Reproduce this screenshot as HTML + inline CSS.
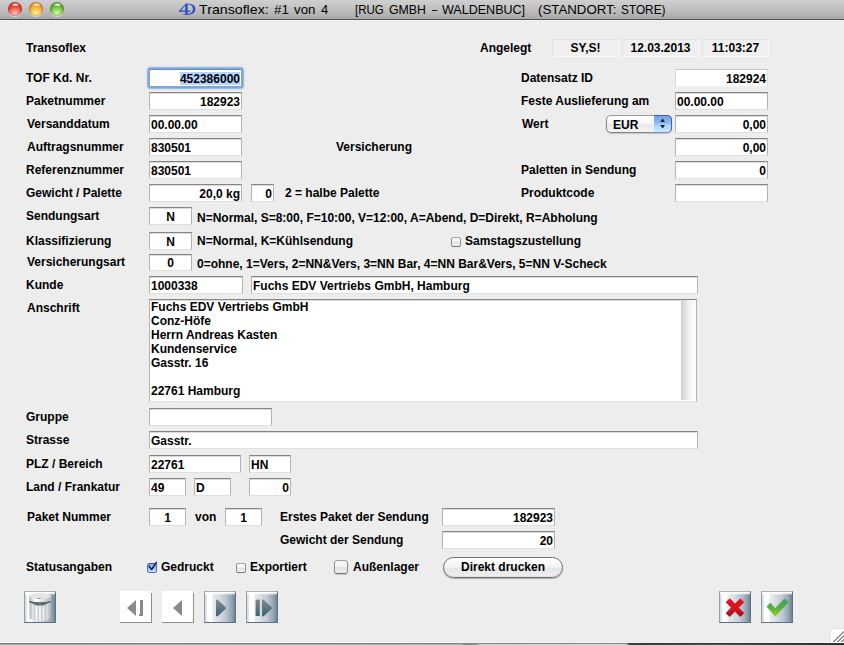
<!DOCTYPE html>
<html>
<head>
<meta charset="utf-8">
<title>Transoflex</title>
<style>
html,body{margin:0;padding:0}
body{width:844px;height:645px;overflow:hidden;position:relative;background:#ededed;
 font-family:"Liberation Sans",sans-serif;font-weight:bold;font-size:12px;line-height:14px;color:#000}
div,span{position:absolute;box-sizing:border-box;white-space:nowrap}
/* title bar */
#tb{left:0;top:0;width:844px;height:19px;background:linear-gradient(#cfcfcf,#c3c3c3 40%,#aeaeae 88%,#a9a9a9);}
#tbl{left:0;top:19px;width:844px;height:1px;background:#515151}
#tbh{left:0;top:20px;width:844px;height:1px;background:#f2f2f2}
.tl{width:14px;height:14px;border-radius:50%;top:2px;box-shadow:0 1px 0 rgba(255,255,255,.5)}
.tt{font-weight:normal;font-size:13px;line-height:16px;top:2px;color:#000}
/* labels */
.l{left:26px}
/* fields */
.f{height:18px;background:#fff;border:1px solid;border-color:#848484 #b3b3b3 #e0e0e0 #b3b3b3;
 padding:2px 1px 0 1px;overflow:hidden;box-shadow:inset 0 1px 0 #dcdcdc}
.r{text-align:right}
.c{text-align:center;padding-left:0;padding-right:0}
.w{width:93px}
.ro{height:18px;background:#efefef;border:1px solid;border-color:#e1e1e1 #f9f9f9 #f9f9f9 #e1e1e1;text-align:center;padding-top:1px}
.cb{width:10px;height:10px;border:1px solid;border-color:#a2a2a2 #8e8e8e #747474 #8e8e8e;border-radius:2.5px;background:linear-gradient(#fff,#f2f2f2 40%,#e3e3e3 55%,#f4f4f4)}
.btn{width:32px;height:32px;top:591px}
.nb{background:linear-gradient(#8f8f8f,#8f8f8f) 31px 2px/1px 30px no-repeat,linear-gradient(#8f8f8f,#8f8f8f) 0 31px/32px 1px no-repeat,linear-gradient(#fff,#fff) 0 0/31px 31px no-repeat}
.mb{border:1px solid;border-color:#a9b2b9 #5e7380 #5b7080 #929fa9;
 background:linear-gradient(90deg,#d3dae0 0,#dde3e8 1.4px,#fff 2.6px,#fff 6.6px,#e8ecf0 8px,#d9dfe6 13px,#c0cad3 20px,#98a8b5 26px,#7a8d9c 29px,#6f8392 30px)}
.mb:before{content:"";position:absolute;left:0;top:0;width:30px;height:3px;background:linear-gradient(#fff 0,#fff 35%,rgba(255,255,255,0) 100%)}
svg{position:absolute;left:0;top:0}
</style>
</head>
<body>
<!-- title bar -->
<div id="tb"></div><div id="tbl"></div><div id="tbh"></div>
<div class="tl" style="left:8px;background:radial-gradient(ellipse 56% 48% at 50% 79%,rgba(255,210,205,.95) 0,rgba(255,255,255,0) 100%),radial-gradient(circle at 50% 52%,#ee3c32 0,#ee3c32 46%,#b3231c 70%,#66110d 92%)"></div>
<div style="left:11.5px;top:3px;width:7px;height:3px;border-radius:50%;background:radial-gradient(ellipse at 50% 60%,rgba(255,255,255,.95) 0,rgba(255,255,255,.55) 45%,rgba(255,255,255,0) 100%)"></div>
<div class="tl" style="left:29px;background:radial-gradient(ellipse 56% 48% at 50% 79%,rgba(255,246,160,.95) 0,rgba(255,255,255,0) 100%),radial-gradient(circle at 50% 52%,#f4a930 0,#f4a930 46%,#c06a16 70%,#6f3c0b 92%)"></div>
<div style="left:32.5px;top:3px;width:7px;height:3px;border-radius:50%;background:radial-gradient(ellipse at 50% 60%,rgba(255,255,255,.95) 0,rgba(255,255,255,.55) 45%,rgba(255,255,255,0) 100%)"></div>
<div class="tl" style="left:50px;background:radial-gradient(ellipse 56% 48% at 50% 79%,rgba(222,250,170,.95) 0,rgba(255,255,255,0) 100%),radial-gradient(circle at 50% 52%,#6cb83c 0,#6cb83c 46%,#3f8a24 70%,#1f4c10 92%)"></div>
<div style="left:53.5px;top:3px;width:7px;height:3px;border-radius:50%;background:radial-gradient(ellipse at 50% 60%,rgba(255,255,255,.95) 0,rgba(255,255,255,.55) 45%,rgba(255,255,255,0) 100%)"></div>
<svg width="24" height="19" style="left:176px;top:0" viewBox="176 0 24 19"><path fill-rule="evenodd" fill="#2f4fc2" d="M185.9 3.5 L187.7 3.5 L187.7 10.6 L190.4 10.6 L190.4 11.7 L187.7 11.7 L187.7 13.9 L189.3 14.3 L189.3 14.8 L183.3 14.8 L183.3 14.3 L185.2 13.9 L185.2 11.7 L178.9 11.7 L178.9 10.9 Z M185.2 5.6 L181 10.6 L185.2 10.6 Z"/><path fill="#2f4fc2" d="M187.2 3.7 C192.8 3.3 195.4 5.8 195.4 9.1 C195.4 12.7 192.6 15 187.2 14.7 L187.2 14 C190.9 14.1 192.9 12.4 192.9 9.1 C192.9 6.1 191 4.3 187.2 4.5 Z"/></svg>
<div class="tt" style="left:199.1px;font-size:13.5px;transform-origin:0 0;transform:scaleX(1.052)">Transoflex:</div>
<div class="tt" style="left:273.5px;font-size:13.5px;transform-origin:0 0;transform:scaleX(0.992)">#1</div>
<div class="tt" style="left:294.2px;font-size:13.5px;transform-origin:0 0;transform:scaleX(0.983)">von</div>
<div class="tt" style="left:320.5px;font-size:13.5px;transform-origin:0 0;transform:scaleX(0.975)">4</div>
<div class="tt" style="left:354.5px;font-size:13px;transform-origin:0 0;transform:scaleX(0.886)">[RUG</div>
<div class="tt" style="left:389.1px;font-size:13px;transform-origin:0 0;transform:scaleX(0.945)">GMBH</div>
<div class="tt" style="left:431.8px;font-size:13px;transform-origin:0 0;transform:scaleX(0.712)">–</div>
<div class="tt" style="left:442.2px;font-size:13px;transform-origin:0 0;transform:scaleX(0.964)">WALDENBUC]</div>
<div class="tt" style="left:538.2px;font-size:13px;transform-origin:0 0;transform:scaleX(1.021)">(STANDORT:</div>
<div class="tt" style="left:620.5px;font-size:13px;transform-origin:0 0;transform:scaleX(0.910)">STORE)</div>

<!-- header row -->
<div class="l" style="top:41px">Transoflex</div>
<div style="left:480px;top:41px">Angelegt</div>
<div class="ro" style="left:552px;top:39px;width:67px">SY,S!</div>
<div class="ro" style="left:622px;top:39px;width:77px">12.03.2013</div>
<div class="ro" style="left:702px;top:39px;width:67px">11:03:27</div>

<!-- left column -->
<div class="l" style="top:71px">TOF Kd. Nr.</div>
<div class="f w r" style="left:149px;top:69px;border-color:#6b8fc4 #7aa5da #7aa5da #7aa5da;border-radius:1.5px;box-shadow:0 0 0 1px #7ca8de,0 0 1.3px 1.9px rgba(124,168,222,.85);overflow:visible"><span style="right:1px;top:2px;height:13px;width:60px;background:#b5d5ff"></span><span style="position:relative">452386000</span></div>
<div class="l" style="top:94px">Paketnummer</div>
<div class="f w r" style="left:149px;top:92px">182923</div>
<div class="l" style="top:117px;left:27px">Versanddatum</div>
<div class="f w" style="left:149px;top:115px">00.00.00</div>
<div class="l" style="top:140px;left:27px">Auftragsnummer</div>
<div class="f w" style="left:149px;top:138px">830501</div>
<div class="l" style="top:163px">Referenznummer</div>
<div class="f w" style="left:149px;top:161px">830501</div>
<div class="l" style="top:186px">Gewicht / Palette</div>
<div class="f w r" style="left:149px;top:184px">20,0 kg</div>
<div class="f r" style="left:251px;top:184px;width:23px">0</div>
<div style="left:285px;top:186px">2 = halbe Palette</div>
<div class="l" style="top:209px">Sendungsart</div>
<div class="f c" style="left:149px;top:207px;width:43px">N</div>
<div style="left:197px;top:211px">N=Normal, S=8:00, F=10:00, V=12:00, A=Abend, D=Direkt, R=Abholung</div>
<div class="l" style="top:234px">Klassifizierung</div>
<div class="f c" style="left:149px;top:232px;width:43px">N</div>
<div style="left:197px;top:234px">N=Normal, K=Kühlsendung</div>
<div class="cb" style="left:451px;top:237px"></div>
<div style="left:465px;top:234px">Samstagszustellung</div>
<div class="l" style="top:255px;left:27px">Versicherungsart</div>
<div class="f c" style="left:149px;top:254px;width:43px;height:17px;padding-top:1px">0</div>
<div style="left:197px;top:257px">0=ohne, 1=Vers, 2=NN&amp;Vers, 3=NN Bar, 4=NN Bar&amp;Vers, 5=NN V-Scheck</div>
<div class="l" style="top:278px">Kunde</div>
<div class="f" style="left:149px;top:276px;width:94px">1000338</div>
<div class="f" style="left:251px;top:276px;width:447px">Fuchs EDV Vertriebs GmbH, Hamburg</div>
<div class="l" style="top:301px;left:27px">Anschrift</div>
<div class="f" style="left:149px;top:299px;width:548px;height:103px;padding:0 0 0 1px;line-height:14px;white-space:pre">Fuchs EDV Vertriebs GmbH
Conz-Höfe
Herrn Andreas Kasten
Kundenservice
Gasstr. 16

22761 Hamburg</div>
<div style="left:681px;top:300px;width:15px;height:100px;background:linear-gradient(90deg,#cdcdcd,#e3e3e3 30%,#f7f7f7 65%,#fdfdfd)"></div>
<div class="l" style="top:410px">Gruppe</div>
<div class="f" style="left:149px;top:408px;width:123px"></div>
<div class="l" style="top:433px">Strasse</div>
<div class="f" style="left:149px;top:431px;width:549px">Gasstr.</div>
<div class="l" style="top:457px">PLZ / Bereich</div>
<div class="f" style="left:149px;top:455px;width:92px">22761</div>
<div class="f" style="left:249px;top:455px;width:42px">HN</div>
<div class="l" style="top:480px">Land / Frankatur</div>
<div class="f" style="left:149px;top:478px;width:37px">49</div>
<div class="f" style="left:194px;top:478px;width:37px">D</div>
<div class="f r" style="left:249px;top:478px;width:42px">0</div>
<div class="l" style="top:510px;left:27px">Paket Nummer</div>
<div class="f c" style="left:149px;top:508px;width:37px">1</div>
<div style="left:195px;top:510px">von</div>
<div class="f c" style="left:225px;top:508px;width:37px">1</div>
<div style="left:280px;top:510px">Erstes Paket der Sendung</div>
<div class="f r" style="left:442px;top:508px;width:113px">182923</div>
<div style="left:280px;top:533px">Gewicht der Sendung</div>
<div class="f r" style="left:442px;top:531px;width:113px">20</div>

<!-- status row -->
<div class="l" style="top:560px">Statusangaben</div>
<div class="cb" style="left:147px;top:563px;background:linear-gradient(#7aa5e7,#9dc5f5 50%,#c8e6ff);border-color:#3f52b4 #5070c6 #58699a #5070c6"></div>
<svg width="14" height="14" style="left:146px;top:559px" viewBox="0 0 14 14"><path d="M3.1 7.3 L5.6 10.5 L10.5 3.4" fill="none" stroke="#141c33" stroke-width="1.5" stroke-linecap="round" stroke-linejoin="round"/></svg>
<div style="left:161px;top:560px">Gedruckt</div>
<div class="cb" style="left:236px;top:563px"></div>
<div style="left:250px;top:560px">Exportiert</div>
<div class="cb" style="left:334px;top:560px;width:14px;height:14px;border-radius:3.5px;border-color:#a0a0a0 #8c8c8c #707070 #8c8c8c;background:linear-gradient(#fdfdfd,#f0f0f0 50%,#e2e2e2 55%,#efefef);box-shadow:0 1px 1px rgba(0,0,0,.18)"></div>
<div style="left:353px;top:560px">Außenlager</div>
<div style="left:443px;top:557px;width:120px;height:21px;border-radius:11px;border:1px solid #6f6f6f;background:linear-gradient(#ffffff,#f4f4f4 45%,#e6e6e6 55%,#f0f0f0);text-align:center;padding-top:2px;box-shadow:0 1px 1px rgba(0,0,0,.28),inset 0 -1px 1px rgba(0,0,0,.06)">Direkt drucken</div>

<!-- right column -->
<div style="left:521px;top:71px">Datensatz ID</div>
<div class="f w r" style="left:675px;top:69px;border-color:#c5c5c5 #dcdcdc #f2f2f2 #d8d8d8;box-shadow:none">182924</div>
<div style="left:521px;top:94px">Feste Auslieferung am</div>
<div class="f w" style="left:675px;top:92px">00.00.00</div>
<div style="left:522px;top:117px">Wert</div>
<div style="left:606px;top:115px;width:66px;height:18px;border-radius:5px;border:1px solid #858585;border-top-color:#9a9a9a;background:linear-gradient(#ffffff,#f6f6f6 50%,#e9e9e9 52%,#f3f3f3);box-shadow:0 1px 1px #c4c4c4;padding:2px 0 0 6px">EUR</div>
<div style="left:654px;top:115px;width:18px;height:18px;border-radius:0 5px 5px 0;border:1px solid #4a5fb5;border-left:0;border-bottom-color:#7f8fb5;background:linear-gradient(#6ea4e8,#8fbff4 50%,#a6d1fa 52%,#c9e7ff)"></div>
<svg width="18" height="18" style="left:654px;top:115px" viewBox="0 0 18 18"><path d="M8.6 3.4 L11 6.9 L6.2 6.9Z M6.2 10 L11 10 L8.6 13.5Z" fill="#1b1b1b"/></svg>
<div class="f w r" style="left:675px;top:115px">0,00</div>
<div style="left:336px;top:140px">Versicherung</div>
<div class="f w r" style="left:675px;top:138px">0,00</div>
<div style="left:521px;top:163px">Paletten in Sendung</div>
<div class="f w r" style="left:675px;top:161px">0</div>
<div style="left:521px;top:186px">Produktcode</div>
<div class="f w" style="left:675px;top:184px"></div>

<!-- bottom buttons -->
<div class="btn mb" style="left:24px"></div>
<svg width="32" height="32" style="left:24px;top:591px" viewBox="0 0 32 32">
 <defs><linearGradient id="can" x1="0" x2="1"><stop offset="0" stop-color="#b9bfc3"/><stop offset=".1" stop-color="#d3d7d9"/><stop offset=".3" stop-color="#f8f8f8"/><stop offset=".65" stop-color="#eceeef"/><stop offset=".9" stop-color="#d2d6d9"/><stop offset="1" stop-color="#bcc2c6"/></linearGradient>
 <linearGradient id="lid" x1="0" x2="1"><stop offset="0" stop-color="#b5babd"/><stop offset=".3" stop-color="#ffffff"/><stop offset=".55" stop-color="#e6e8e9"/><stop offset="1" stop-color="#b4babe"/></linearGradient></defs>
 <path d="M5.3 9 L5.6 27.4 Q16 32.4 26.2 27.4 L26.5 9Z" fill="url(#can)"/>
 <path d="M6.9 12V28 M10.7 13.5V29.4 M14.2 14V30 M17.8 14V30 M21.4 13.5V29.4 M25 12V28" stroke="#bcc2c5" stroke-width="1.2" fill="none"/>
 <path d="M5.2 9.8 Q16 12.6 26.7 9.8 L26.7 11.2 Q16 17.2 5.2 11.2Z" fill="#5a6d73"/>
 <path d="M8 12.4 Q16 16.4 24 12.4 Q16 17.8 8 12.4Z" fill="#93a3a8"/>
 <path d="M5 5 L5 9.6 Q16 12.6 27 9.6 L27 5Z" fill="url(#lid)"/>
 <ellipse cx="16" cy="5" rx="11" ry="2.9" fill="#e3e5e6"/>
 <ellipse cx="15" cy="7.5" rx="2.2" ry=".5" fill="#969ea2"/>
</svg>
<div class="btn nb" style="left:120px"></div>
<svg width="32" height="32" style="left:120px;top:591px" viewBox="0 0 32 32"><path d="M7 17 L16 9 L16 25Z M20 9 H23 V25 H19 V23 H20Z" fill="#8b8b8b"/></svg>
<div class="btn nb" style="left:162px"></div>
<svg width="32" height="32" style="left:162px;top:591px" viewBox="0 0 32 32"><path d="M11 17 L20 9 L20 25Z" fill="#8b8b8b"/></svg>
<div class="btn mb" style="left:204px"></div>
<svg width="32" height="32" style="left:204px;top:591px" viewBox="0 0 32 32"><defs><linearGradient id="tg" x1="0" y1="0" x2="0" y2="1"><stop offset="0" stop-color="#858585"/><stop offset=".45" stop-color="#637883"/><stop offset="1" stop-color="#3a6479"/></linearGradient></defs><path d="M13 9.6 L21 17 L13 24.4Z" fill="url(#tg)" stroke="url(#tg)" stroke-width="2" stroke-linejoin="round"/></svg>
<div class="btn mb" style="left:246px"></div>
<svg width="32" height="32" style="left:246px;top:591px" viewBox="0 0 32 32"><path d="M9.6 8.6 H13.8 V25 H9.6Z" fill="url(#tg)"/><path d="M17 9.6 L25 17 L17 24.4Z" fill="url(#tg)" stroke="url(#tg)" stroke-width="2" stroke-linejoin="round"/></svg>
<div class="btn mb" style="left:719px"></div>
<svg width="32" height="32" style="left:719px;top:591px" viewBox="0 0 32 32"><defs><linearGradient id="rg" x1="0" y1="0" x2="0" y2="1"><stop offset="0" stop-color="#e8141f"/><stop offset=".55" stop-color="#d8121e"/><stop offset="1" stop-color="#a00e1b"/></linearGradient></defs><path d="M7.2 11.2 L10.8 7.8 L16 13.2 L21.2 7.8 L24.8 11.2 L19.5 16.7 L24.8 22.2 L21.2 25.5 L16 20.2 L10.8 25.5 L7.2 22.2 L12.5 16.7Z" fill="url(#rg)" stroke="url(#rg)" stroke-width=".9" stroke-linejoin="round"/></svg>
<div class="btn mb" style="left:761px"></div>
<svg width="32" height="32" style="left:761px;top:591px" viewBox="0 0 32 32"><defs><linearGradient id="gg" x1="0" y1="0" x2="0" y2="1"><stop offset="0" stop-color="#35a060"/><stop offset=".5" stop-color="#55b040"/><stop offset="1" stop-color="#a4cc10"/></linearGradient></defs><path d="M6 15.5 L9.2 12.2 L14.2 17.6 L23.6 8 L27 11.2 L14.3 25.2Z" fill="url(#gg)" stroke="url(#gg)" stroke-width=".9" stroke-linejoin="round"/></svg>

<!-- resize grip & bottom edge -->
<div style="left:830px;top:628px;width:14px;height:15px;background:#fff;border-left:1px solid #e5e5e5;border-top:1px solid #e5e5e5"></div>
<svg width="14" height="14" style="left:830px;top:629px" viewBox="0 0 14 14"><path d="M3 13.5 L14 2.5 M7 13.5 L14 6.5 M11 13.5 L14 10.5" stroke="#7a7a7a" stroke-width="1.2" fill="none"/></svg>
<div style="left:0;top:642px;width:844px;height:1px;background:linear-gradient(90deg,#fafafa 0,#f6f6f6 60%,#f0f0f0 98%,#fff 98.4%)"></div>
<div style="left:0;top:643px;width:844px;height:1px;background:linear-gradient(90deg,#7c7c7c 0,#868686 74.2%,#3a3a3a 74.6%,#303030 100%)"></div>
<div style="left:0;top:644px;width:844px;height:1px;background:linear-gradient(90deg,#a6a6a6 0,#b0b0b0 54.7%,#8a8a8a 54.9%,#8a8a8a 56.4%,#cacaca 56.7%,#d4d4d4 74.2%,#383838 74.6%,#555 85%,#2a2a2a 100%)"></div>
</body>
</html>
